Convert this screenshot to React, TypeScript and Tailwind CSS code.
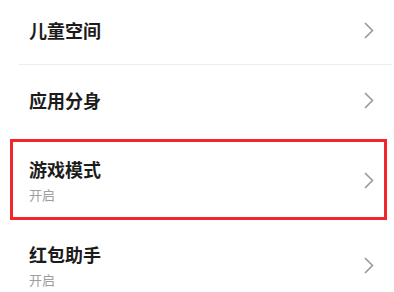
const FONT = "font-['Noto_Sans_CJK_SC','Noto_Sans',sans-serif]";

function Chevron() {
  return (
    <svg width="10" height="17" viewBox="0 0 10 17" fill="none" className="shrink-0">
      <path d="M1.5 1.5 L8.5 8.5 L1.5 15.5" stroke="#9a9a9a" strokeWidth="1.7" strokeLinecap="round" strokeLinejoin="round" />
    </svg>
  );
}

function Title({ children }: { children: string }) {
  return <p className="text-[18px] leading-[24px] font-semibold text-[#1c1c1c]">{children}</p>;
}

function Sub({ children }: { children: string }) {
  return <p className="mt-[5px] text-[13px] leading-[18px] text-[#9e9e9e]">{children}</p>;
}

export default function App() {
  return (
    <div className={`w-[394px] h-[292px] overflow-hidden bg-white ${FONT}`}>
      <div className="flex items-center justify-between pl-[29px] pr-[20px] pt-[18px] pb-[22px]">
        <Title>儿童空间</Title>
        <Chevron />
      </div>
      <div className="ml-[19px] mr-[2px] h-px bg-[#ececec]" />

      <div className="flex items-center justify-between pl-[29px] pr-[20px] pt-[23px] pb-[24px]">
        <Title>应用分身</Title>
        <Chevron />
      </div>

      <div className="mt-[3px] ml-[10px] mr-[7px] border-[3px] border-[#f0262b] flex items-center justify-between pl-[16px] pr-[10px] pt-[15px] pb-[13px]">
        <div>
          <Title>游戏模式</Title>
          <Sub>开启</Sub>
        </div>
        <Chevron />
      </div>

      <div className="flex items-center justify-between pl-[29px] pr-[20px] pt-[22px]">
        <div>
          <Title>红包助手</Title>
          <Sub>开启</Sub>
        </div>
        <Chevron />
      </div>
    </div>
  );
}
